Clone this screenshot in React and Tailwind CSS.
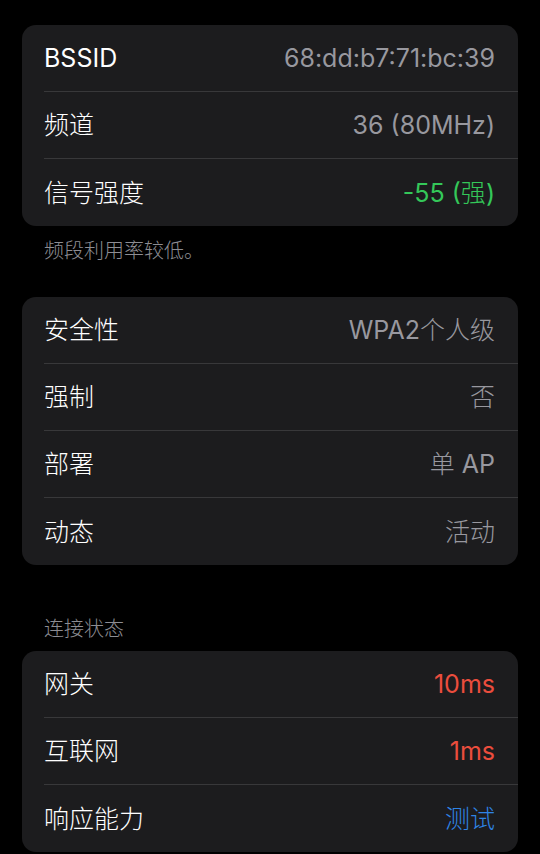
const sections = [
  {
    rows: [
      { label: "BSSID", value: "68:dd:b7:71:bc:39" },
      { label: "频道", value: "36 (80MHz)" },
      { label: "信号强度", value: "-55 (强)", color: "text-[#34c759]" },
    ],
    footer: "频段利用率较低。",
  },
  {
    rows: [
      { label: "安全性", value: "WPA2个人级" },
      { label: "强制", value: "否" },
      { label: "部署", value: "单 AP" },
      { label: "动态", value: "活动" },
    ],
  },
  {
    header: "连接状态",
    rows: [
      { label: "网关", value: "10ms", color: "text-[#eb4d3d]" },
      { label: "互联网", value: "1ms", color: "text-[#eb4d3d]" },
      { label: "响应能力", value: "测试", color: "text-[#2f84e6]" },
    ],
  },
];

// chinese glyphs look lighter than the latin ones in the screenshot
function Txt({ children }) {
  return children.split(/([\u3000-\u9fff]+)/).map((part, i) =>
    /[\u3000-\u9fff]/.test(part) ? (
      <span key={i} className="font-light">
        {part}
      </span>
    ) : (
      part
    )
  );
}

function Row({ label, value, color, last }) {
  return (
    <div className="pl-[22px]">
      <div
        className={`flex h-[67px] items-center justify-between pr-[23px] ${
          last ? "" : "border-b border-[#38383a]"
        }`}
      >
        <span className="text-white">
          <Txt>{label}</Txt>
        </span>
        <span className={color || "text-[#98989f]"}>
          <Txt>{value}</Txt>
        </span>
      </div>
    </div>
  );
}

export default function App() {
  return (
    <div
      className="min-h-[854px] bg-black px-[22px] pt-[25px] text-[25px] leading-[30px]"
      style={{ fontFamily: '"Inter", "Noto Sans CJK SC", sans-serif' }}
    >
      {sections.map((s, i) => (
        <div key={i} className={i === 1 ? "mt-[32px]" : ""}>
          {s.header && (
            <div className="mt-[50px] mb-[8px] pl-[22px] text-[20px] font-light leading-[28px] text-[#8d8d93]">
              {s.header}
            </div>
          )}
          <div className="overflow-hidden rounded-[14px] bg-[#1c1c1e]">
            {s.rows.map((r, j) => (
              <Row key={j} {...r} last={j === s.rows.length - 1} />
            ))}
          </div>
          {s.footer && (
            <div className="mt-[11px] pl-[22px] text-[20px] font-light leading-[28px] text-[#8d8d93]">
              {s.footer}
            </div>
          )}
        </div>
      ))}
    </div>
  );
}
